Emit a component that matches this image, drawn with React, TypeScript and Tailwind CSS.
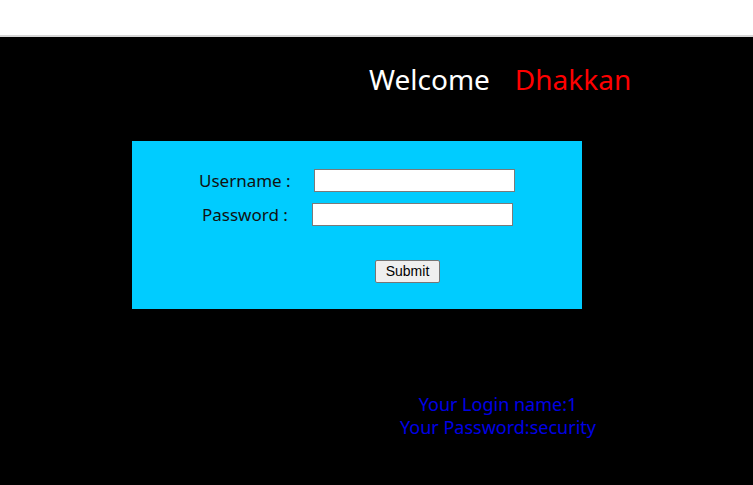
export default function App() {
  const font = { fontFamily: '"Noto Sans", "Open Sans", sans-serif' };
  return (
    <div className="w-[753px] h-[485px] overflow-hidden bg-black" style={font}>
      <div className="h-[37px] bg-white border-b-2 border-[#d6d6d6]" />
      <div className="flex flex-col">
        <div className="flex pl-[369px] pt-[23px] text-[28px] leading-[38px]">
          <span className="text-white">Welcome</span>
          <span className="text-[#ff0000] ml-[25px]">Dhakkan</span>
        </div>
        <div className="ml-[132px] mt-[43px] w-[450px] h-[168px] bg-[#00ccff] flex flex-col">
          <div className="flex items-center mt-[28px] h-[23px]">
            <span className="ml-[67px] w-[115px] text-[17px] text-[#111]">Username :</span>
            <input className="w-[201px] h-[23px] bg-white border border-[#7a7a7a]" />
          </div>
          <div className="flex items-center mt-[11px] h-[23px]">
            <span className="ml-[70px] w-[110px] text-[17px] text-[#111]">Password :</span>
            <input type="password" className="w-[201px] h-[23px] bg-white border border-[#7a7a7a]" />
          </div>
          <div className="flex mt-[34px]">
            <button
              className="ml-[243px] w-[65px] h-[23px] bg-[#efefef] border border-[#767676] rounded-[2px] text-[14px] text-black"
              style={{ fontFamily: '"Liberation Sans", Arial, sans-serif' }}
            >
              Submit
            </button>
          </div>
        </div>
        <div className="flex flex-col items-center ml-[243px] w-[510px] mt-[84px] text-[18px] leading-[23px] text-[#0000e6]">
          <span>Your Login name:1</span>
          <span>Your Password:security</span>
        </div>
      </div>
    </div>
  );
}
